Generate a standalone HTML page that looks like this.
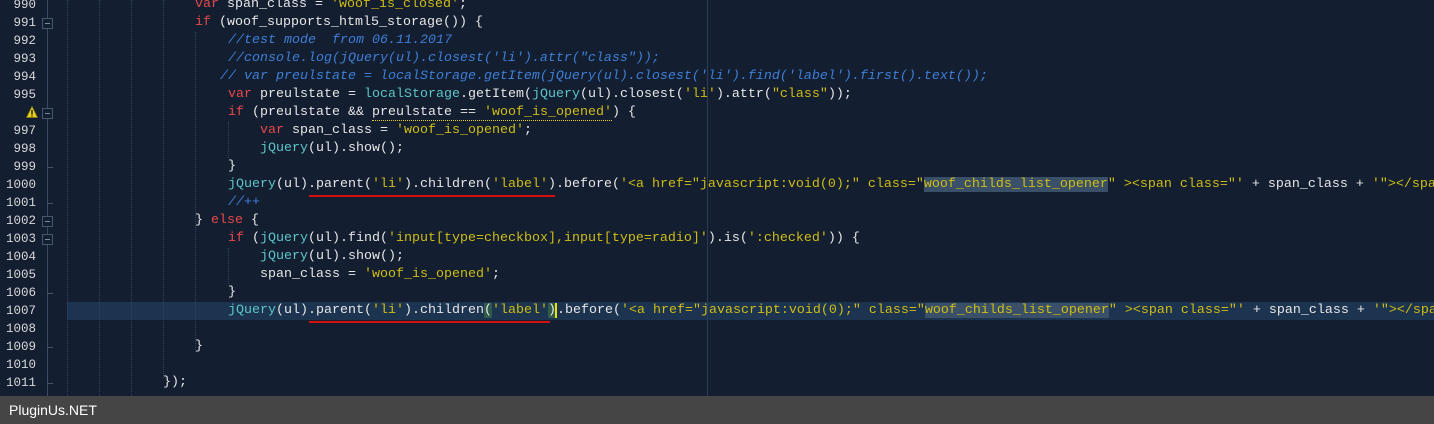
<!DOCTYPE html>
<html><head><meta charset="utf-8"><style>
body{margin:0;width:1434px;height:424px;overflow:hidden;background:#131e31;position:relative;font-family:"Liberation Mono",monospace;font-size:13.33px}
.l{position:absolute;white-space:pre;height:18px;line-height:18px;color:#e6e6e6}
.n{position:absolute;width:36px;text-align:right;color:#d8d8d8;height:18px;line-height:18px;font-size:12.5px}
.k{color:#e84848}.s{color:#cfbd12}.c{color:#3f7fd6;font-style:italic}.t{color:#5cc6c6}
.g{position:absolute;width:0;border-left:1px dotted #34465e}
.fb{position:absolute;left:42px;width:9px;height:9px;border:1px solid #45566e;background:#131e31}
.fb:after{content:"";position:absolute;left:2px;top:4px;width:5px;height:1px;background:#7a8aa0}
.tk{position:absolute;left:47px;width:6px;height:1px;background:#45566e}
.sel{background:#3a5068}
</style></head><body>
<div style="position:absolute;left:67px;top:302px;width:1367px;height:18px;background:#1d3450"></div>
<div style="position:absolute;left:47px;top:0;width:1px;height:396px;background:#3a4a62"></div>
<div style="position:absolute;left:707px;top:0;width:1px;height:396px;background:#2c3c54"></div>
<div class="g" style="left:67px;top:0;height:396px"></div>
<div class="g" style="left:99px;top:0;height:396px"></div>
<div class="g" style="left:131px;top:0;height:396px"></div>
<div class="g" style="left:163px;top:0;height:378px"></div>
<div class="g" style="left:195px;top:32px;height:320px"></div>
<div class="g" style="left:228px;top:122px;height:36px"></div>
<div class="g" style="left:228px;top:248px;height:36px"></div>

<div class="fb" style="top:18px"></div>
<div class="fb" style="top:108px"></div>
<div class="fb" style="top:216px"></div>
<div class="fb" style="top:234px"></div>
<div class="tk" style="top:167px"></div>
<div class="tk" style="top:203px"></div>
<div class="tk" style="top:293px"></div>
<div class="tk" style="top:347px"></div>
<div class="tk" style="top:383px"></div>

<div class="n" style="top:-4px">990</div>
<div class="n" style="top:14px">991</div>
<div class="n" style="top:32px">992</div>
<div class="n" style="top:50px">993</div>
<div class="n" style="top:68px">994</div>
<div class="n" style="top:86px">995</div>
<svg style="position:absolute;left:26px;top:106px" width="12" height="12" viewBox="0 0 12 12"><path d="M6 0.5L11.5 11.5H0.5Z" fill="#e8d020" stroke="#8a7a10" stroke-width=".8"/><rect x="5.4" y="4" width="1.2" height="4.5" fill="#000"/><rect x="5.4" y="9.3" width="1.2" height="1.2" fill="#000"/></svg>
<div class="n" style="top:122px">997</div>
<div class="n" style="top:140px">998</div>
<div class="n" style="top:158px">999</div>
<div class="n" style="top:176px">1000</div>
<div class="n" style="top:194px">1001</div>
<div class="n" style="top:212px">1002</div>
<div class="n" style="top:230px">1003</div>
<div class="n" style="top:248px">1004</div>
<div class="n" style="top:266px">1005</div>
<div class="n" style="top:284px">1006</div>
<div class="n" style="top:302px">1007</div>
<div class="n" style="top:320px">1008</div>
<div class="n" style="top:338px">1009</div>
<div class="n" style="top:356px">1010</div>
<div class="n" style="top:374px">1011</div>

<div class="l" style="left:195px;top:-4px"><span class="k">var</span> span_class = <span class="s">'woof_is_closed'</span>;</div>
<div class="l" style="left:195px;top:14px"><span class="k">if</span> (woof_supports_html5_storage()) {</div>
<div class="l c" style="left:228px;top:32px">//test mode  from 06.11.2017</div>
<div class="l c" style="left:228px;top:50px">//console.log(jQuery(ul).closest('li').attr("class"));</div>
<div class="l c" style="left:220px;top:68px">// var preulstate = localStorage.getItem(jQuery(ul).closest('li').find('label').first().text());</div>
<div class="l" style="left:228px;top:86px"><span class="k">var</span> preulstate = <span class="t">localStorage</span>.getItem(<span class="t">jQuery</span>(ul).closest(<span class="s">'li'</span>).attr(<span class="s">"class"</span>));</div>
<div class="l" style="left:228px;top:104px"><span class="k">if</span> (preulstate &amp;&amp; <span style="border-bottom:1px dotted #e8d020">preulstate == <span class="s">'woof_is_opened'</span></span>) {</div>
<div class="l" style="left:260px;top:122px"><span class="k">var</span> span_class = <span class="s">'woof_is_opened'</span>;</div>
<div class="l" style="left:260px;top:140px"><span class="t">jQuery</span>(ul).show();</div>
<div class="l" style="left:228px;top:158px">}</div>
<div class="l" style="left:228px;top:176px"><span class="t">jQuery</span>(ul).parent(<span class="s">'li'</span>).children(<span class="s">'label'</span>).before(<span class="s">'&lt;a href="javascript:void(0);" class="<span class="sel">woof_childs_list_opener</span>" &gt;&lt;span class="'</span> + span_class + <span class="s">'"&gt;&lt;/span&gt;'</span>);</div>
<div class="l c" style="left:228px;top:194px">//++</div>
<div class="l" style="left:195px;top:212px">} <span class="k">else</span> {</div>
<div class="l" style="left:228px;top:230px"><span class="k">if</span> (<span class="t">jQuery</span>(ul).find(<span class="s">'input[type=checkbox],input[type=radio]'</span>).is(<span class="s">':checked'</span>)) {</div>
<div class="l" style="left:260px;top:248px"><span class="t">jQuery</span>(ul).show();</div>
<div class="l" style="left:260px;top:266px">span_class = <span class="s">'woof_is_opened'</span>;</div>
<div class="l" style="left:228px;top:284px">}</div>
<div class="l" style="left:228px;top:302px"><span class="t">jQuery</span>(ul).parent(<span class="s">'li'</span>).children<span style="background:#2f5a4a">(</span><span class="s">'label'</span><span style="background:#2f5a4a">)</span><span style="border-left:2px solid #f0e000;margin-left:-1px"></span>.before(<span class="s">'&lt;a href="javascript:void(0);" class="<span class="sel">woof_childs_list_opener</span>" &gt;&lt;span class="'</span> + span_class + <span class="s">'"&gt;&lt;/span&gt;'</span>);</div>
<div class="l" style="left:195px;top:338px">}</div>
<div class="l" style="left:163px;top:374px">});</div>

<div style="position:absolute;left:309px;top:195px;width:246px;height:2px;background:#d41010"></div>
<div style="position:absolute;left:309px;top:321px;width:241px;height:2px;background:#d41010"></div>

<div style="position:absolute;left:0;top:396px;width:1434px;height:28px;background:#454545;color:#fff;font-family:'Liberation Sans',sans-serif;font-size:14px;line-height:28px;padding-left:9px">PluginUs.NET</div>
</body></html>
